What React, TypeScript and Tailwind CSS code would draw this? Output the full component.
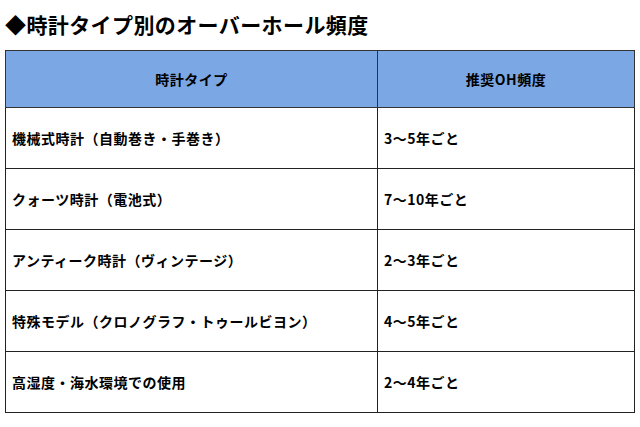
import React from 'react'

const rows: [string, string][] = [
    ['機械式時計（自動巻き・手巻き）', '3〜5年ごと'],
    ['クォーツ時計（電池式）', '7〜10年ごと'],
    ['アンティーク時計（ヴィンテージ）', '2〜3年ごと'],
    ['特殊モデル（クロノグラフ・トゥールビヨン）', '4〜5年ごと'],
    ['高湿度・海水環境での使用', '2〜4年ごと'],
]

const App: React.FC = () => {
    return (
        <div className="w-[640px] h-[427px] bg-white px-[5px] pt-[8px] text-black font-['Noto_Sans_CJK_JP',sans-serif]">
            <h1 className="text-[21px] leading-[32px] font-bold tracking-[0.4px]">◆時計タイプ別のオーバーホール頻度</h1>
            <table className="mt-[10px] w-[630px] border-collapse text-[14px] font-bold tracking-[0.5px]">
                <thead>
                    <tr className="h-[57px] bg-[#7ba7e4]">
                        <th className="w-[372px] border border-[#333] text-center font-bold">時計タイプ</th>
                        <th className="border border-[#333] text-center font-bold">推奨OH頻度</th>
                    </tr>
                </thead>
                <tbody>
                    {rows.map(([type, freq]) => (
                        <tr key={type} className="h-[61px]">
                            <td className="border border-[#222] px-[6px] text-left">{type}</td>
                            <td className="border border-[#222] px-[6px] text-left">{freq}</td>
                        </tr>
                    ))}
                </tbody>
            </table>
        </div>
    )
}

export default App
